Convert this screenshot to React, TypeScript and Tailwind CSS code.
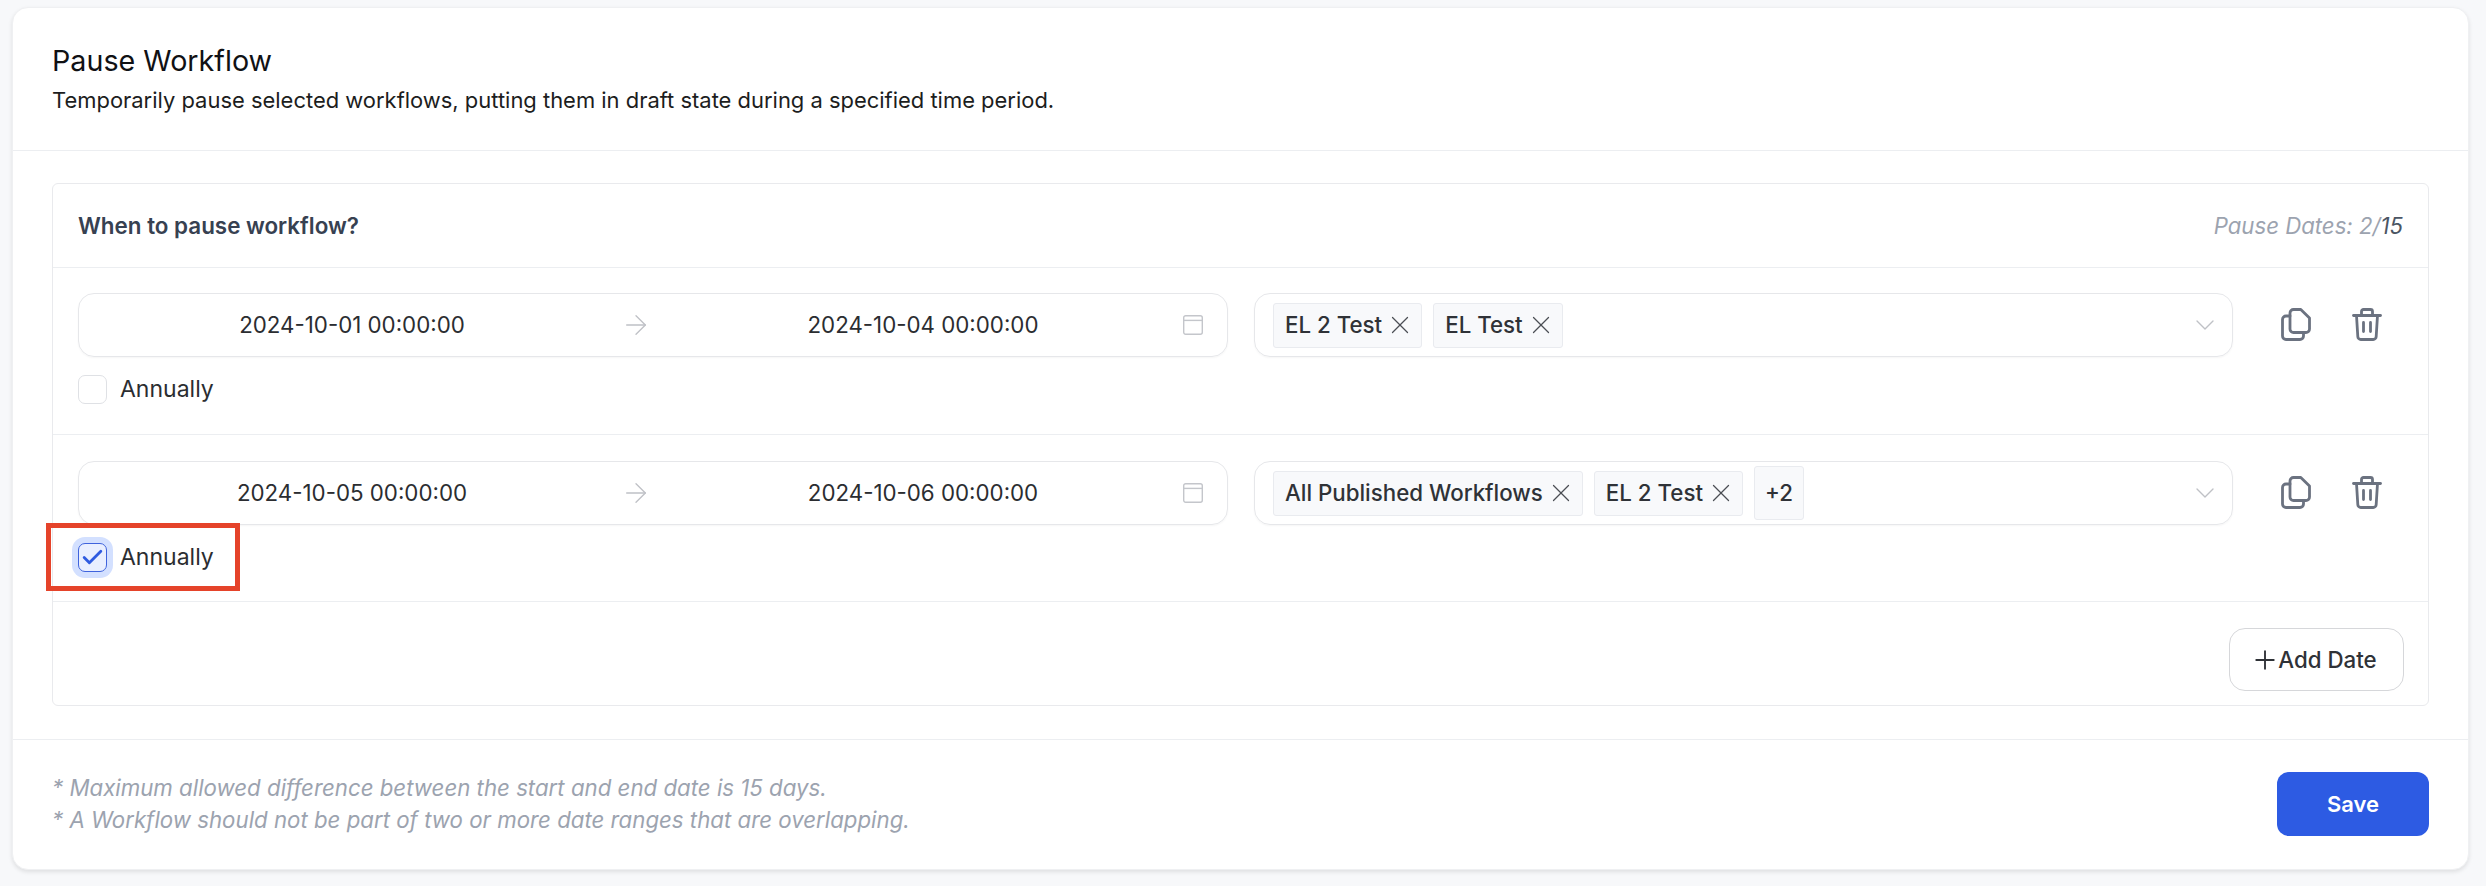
import React from 'react';
import { X, Plus, ChevronDown, Check, ArrowRight } from 'lucide-react';

const CalendarIcon = () => (
  <svg width="22" height="22" viewBox="0 0 22 22" fill="none" stroke="#c4c6cb" strokeWidth="1.4" className="shrink-0">
    <rect x="1.7" y="1.7" width="18.6" height="18.6" rx="2" />
    <path d="M1.7 6.4h18.6" />
  </svg>
);

const CopyIcon = () => (
  <svg width="30" height="34" viewBox="0 0 30 34" fill="none" stroke="#6b7280" strokeWidth="2.8" strokeLinejoin="round" strokeLinecap="round">
    <path d="M9 6.5V5a3.5 3.5 0 0 1 3.5-3.5h7.3L28.5 10v11a3.5 3.5 0 0 1-3.5 3.5H12.5A3.5 3.5 0 0 1 9 21V6.5Z" />
    <path d="M9 8H5a3.5 3.5 0 0 0-3.5 3.5V28A3.5 3.5 0 0 0 5 31.5h14a3.5 3.5 0 0 0 3.5-3.5v-3.5" />
  </svg>
);

const TrashIcon = () => (
  <svg width="30" height="34" viewBox="0 0 30 34" fill="none" stroke="#6b7280" strokeWidth="2.8" strokeLinejoin="round" strokeLinecap="round">
    <path d="M1.5 7.5h27" />
    <path d="M9.5 7.5V3.5a2 2 0 0 1 2-2h7a2 2 0 0 1 2 2v4" />
    <path d="M4.5 7.5l1.3 21a3 3 0 0 0 3 3h12.4a3 3 0 0 0 3-3l1.3-21" />
    <path d="M11.5 14.5v9M18.5 14.5v9" />
  </svg>
);

const Tag = ({ label }: { label: string }) => (
  <span className="flex h-[45px] items-center gap-[8px] rounded-[3px] border border-[#e9ebef] bg-[#f8f9fb] px-[11px] text-[22.3px] font-medium text-[#2f3237]">
    {label}
    <X size={30} strokeWidth={1} className="-mx-[5px] text-[#4b4e54]" />
  </span>
);

interface PauseRowProps {
  start: string;
  end: string;
  tags: string[];
  extra?: string;
  checked?: boolean;
}

const PauseRow = ({ start, end, tags, extra, checked }: PauseRowProps) => (
  <div className={`border-b border-[#eceef1] px-[25px] ${checked ? 'pb-[29px] pt-[26px]' : 'pb-[30px] pt-[25px]'}`}>
    <div className="flex items-start">
      <div className="flex h-[64px] w-[1150px] items-center rounded-[16px] border border-[#e6e7ea] pl-[5px] pr-[23px] shadow-[0_1px_2px_rgba(0,0,0,0.04)]">
        <span className="w-[536px] text-center text-[22.3px] text-[#2b2d31]">{start}</span>
        <ArrowRight size={32} strokeWidth={1} className="shrink-0 text-[#bfc1c6]" />
        <span className="ml-[12px] w-[518px] text-center text-[22.3px] text-[#2b2d31]">{end}</span>
        <CalendarIcon />
      </div>
      <div className="ml-[26px] flex h-[64px] w-[979px] items-center gap-[11px] rounded-[16px] border border-[#e6e7ea] pl-[18px] pr-[11px] shadow-[0_1px_2px_rgba(0,0,0,0.04)]">
        {tags.map((t) => <Tag key={t} label={t} />)}
        {extra && (
          <span className="flex h-[54px] w-[50px] items-center justify-center rounded-[3px] border border-[#e9ebef] bg-[#f8f9fb] text-[22.3px] font-medium text-[#2f3237]">
            {extra}
          </span>
        )}
        <ChevronDown size={32} strokeWidth={1} className="ml-auto text-[#bfc1c6]" />
      </div>
      <div className="ml-[48px] flex h-[64px] items-center gap-[41px]">
        <CopyIcon />
        <TrashIcon />
      </div>
    </div>
    <div className="relative mt-[18px] flex h-[29px] items-center gap-[13px] text-[23px] text-[#2b2d31]">
      {checked ? (
        <span className="flex h-[29px] w-[29px] items-center justify-center rounded-[7px] border border-[#3f63dd] bg-[#e9efff] shadow-[0_0_0_6px_#d3e0ff]">
          <Check size={25} strokeWidth={2.7} className="shrink-0 text-[#2f5be0]" />
        </span>
      ) : (
        <span className="h-[29px] w-[29px] rounded-[7px] border border-[#dfe1e5] bg-white" />
      )}
      Annually
      {checked && <div className="absolute -left-[32px] -top-[20px] h-[68px] w-[194px] border-[5px] border-[#e5432a]" />}
    </div>
  </div>
);

export default function App() {
  return (
    <div className="h-[886px] bg-[#f7f8fa] pl-[12px] pr-[17px] pt-[7px] font-['Inter',sans-serif]">
      <div className="h-[863px] rounded-[16px] border border-[#eff0f2] bg-white shadow-[0_2px_4px_rgba(0,0,0,0.1)]">
        <div className="h-[143px] border-b border-[#eceef1] pl-[39px] pt-[35px]">
          <h1 className="text-[28.7px] leading-[36px] text-[#101114]">Pause Workflow</h1>
          <p className="mt-[5px] text-[21.95px] leading-[32px] text-[#1c1d20]">Temporarily pause selected workflows, putting them in draft state during a specified time period.</p>
        </div>
        <div className="h-[589px] border-b border-[#eceef1] pl-[39px] pr-[39px] pt-[32px]">
          <div className="h-[523px] rounded-[6px] border border-[#e9eaed]">
            <div className="flex h-[84px] items-center justify-between border-b border-[#eceef1] px-[25px]">
              <span className="text-[22.4px] font-semibold text-[#374151]">When to pause workflow?</span>
              <span className="text-[22.2px] italic text-[#9ca3af]">Pause Dates: 2/<span className="text-[#4b5563]">15</span></span>
            </div>
            <PauseRow start="2024-10-01 00:00:00" end="2024-10-04 00:00:00" tags={['EL 2 Test', 'EL Test']} />
            <PauseRow start="2024-10-05 00:00:00" end="2024-10-06 00:00:00" tags={['All Published Workflows', 'EL 2 Test']} extra="+2" checked />
            <div className="flex justify-end pr-[24px] pt-[26px]">
              <button className="flex h-[63px] w-[175px] items-center justify-center gap-[4px] rounded-[16px] border border-[#d6d7da] text-[22.3px] font-medium text-[#2f3237]">
                <Plus size={30} strokeWidth={1.5} className="-mx-[6px]" />
                Add Date
              </button>
            </div>
          </div>
        </div>
        <div className="flex items-start justify-between pl-[39px] pr-[39px] pt-[32px]">
          <div className="text-[22.25px] italic leading-[32px] text-[#9ca3af]">
            <p>* Maximum allowed difference between the start and end date is 15 days.</p>
            <p>* A Workflow should not be part of two or more date ranges that are overlapping.</p>
          </div>
          <button className="h-[64px] w-[152px] rounded-[12px] bg-[#2d5be3] text-[22px] font-semibold text-white">Save</button>
        </div>
      </div>
    </div>
  );
}
